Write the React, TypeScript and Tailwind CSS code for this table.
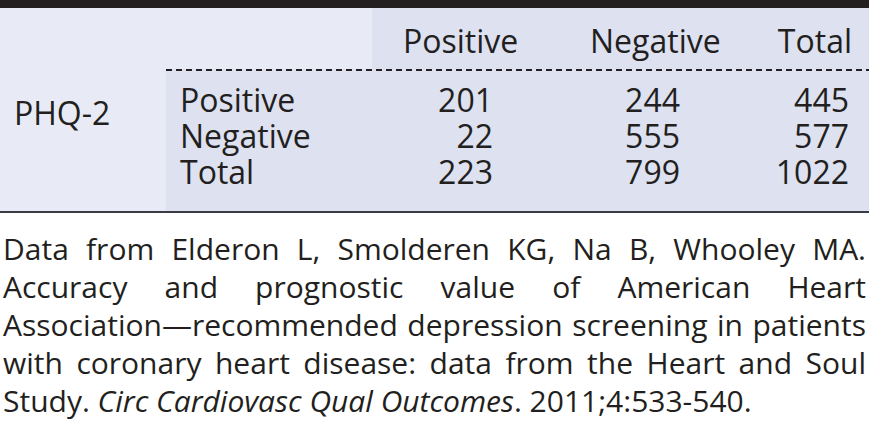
const rows = [
  { label: "Positive", pos: "201", neg: "244", total: "445" },
  { label: "Negative", pos: "22", neg: "555", total: "577" },
  { label: "Total", pos: "223", neg: "799", total: "1022" },
];

export default function App() {
  return (
    <div className="w-[869px] h-[426px] bg-white text-[#231f20] font-['Open_Sans',sans-serif] overflow-hidden">
      <div className="h-[8px] bg-[#231f20]" />

      <div className="flex text-[32px] leading-[36px]">
        <div className="w-[166px] bg-[#e8ebf6] pl-[14px] pt-[87px]">PHQ-2</div>

        <div className="flex-1 flex flex-col">
          <div className="grid grid-cols-[206px_188px_185px_1fr] h-[61px]">
            <div className="bg-[#e8ebf6]" />
            <div className="bg-[#dde1f0] pl-[31px] pt-[15px]">Positive</div>
            <div className="bg-[#dde1f0] pl-[30px] pt-[15px]">Negative</div>
            <div className="bg-[#dde1f0] text-right pr-[17px] pt-[15px]">Total</div>
          </div>

          <div className="h-[2px] bg-[#dde1f0] bg-[repeating-linear-gradient(90deg,#231f20_0_6px,transparent_6px_10px)]" />

          <div className="bg-[#dde1f0] pt-[11px] pb-[21px]">
            {rows.map((r) => (
              <div key={r.label} className="grid grid-cols-[206px_188px_185px_1fr]">
                <div className="pl-[14px]">{r.label}</div>
                <div className="text-right pr-[67px]">{r.pos}</div>
                <div className="text-right pr-[65px]">{r.neg}</div>
                <div className="text-right pr-[20px]">{r.total}</div>
              </div>
            ))}
          </div>
        </div>
      </div>

      <div className="h-[2px] bg-[#3b3b45]" />

      <div className="px-[3px] pt-[17px] text-[30px] leading-[38px] whitespace-nowrap">
        <span className="block text-justify [text-align-last:justify]">
          Data from Elderon L, Smolderen KG, Na B, Whooley MA.
        </span>
        <span className="block text-justify [text-align-last:justify]">
          Accuracy and prognostic value of American Heart
        </span>
        <span className="block text-justify [text-align-last:justify]">
          Association—recommended depression screening in patients
        </span>
        <span className="block text-justify [text-align-last:justify]">
          with coronary heart disease: data from the Heart and Soul
        </span>
        <span className="block">
          Study. <i>Circ Cardiovasc Qual Outcomes</i>. 2011;4:533-540.
        </span>
      </div>
    </div>
  );
}
